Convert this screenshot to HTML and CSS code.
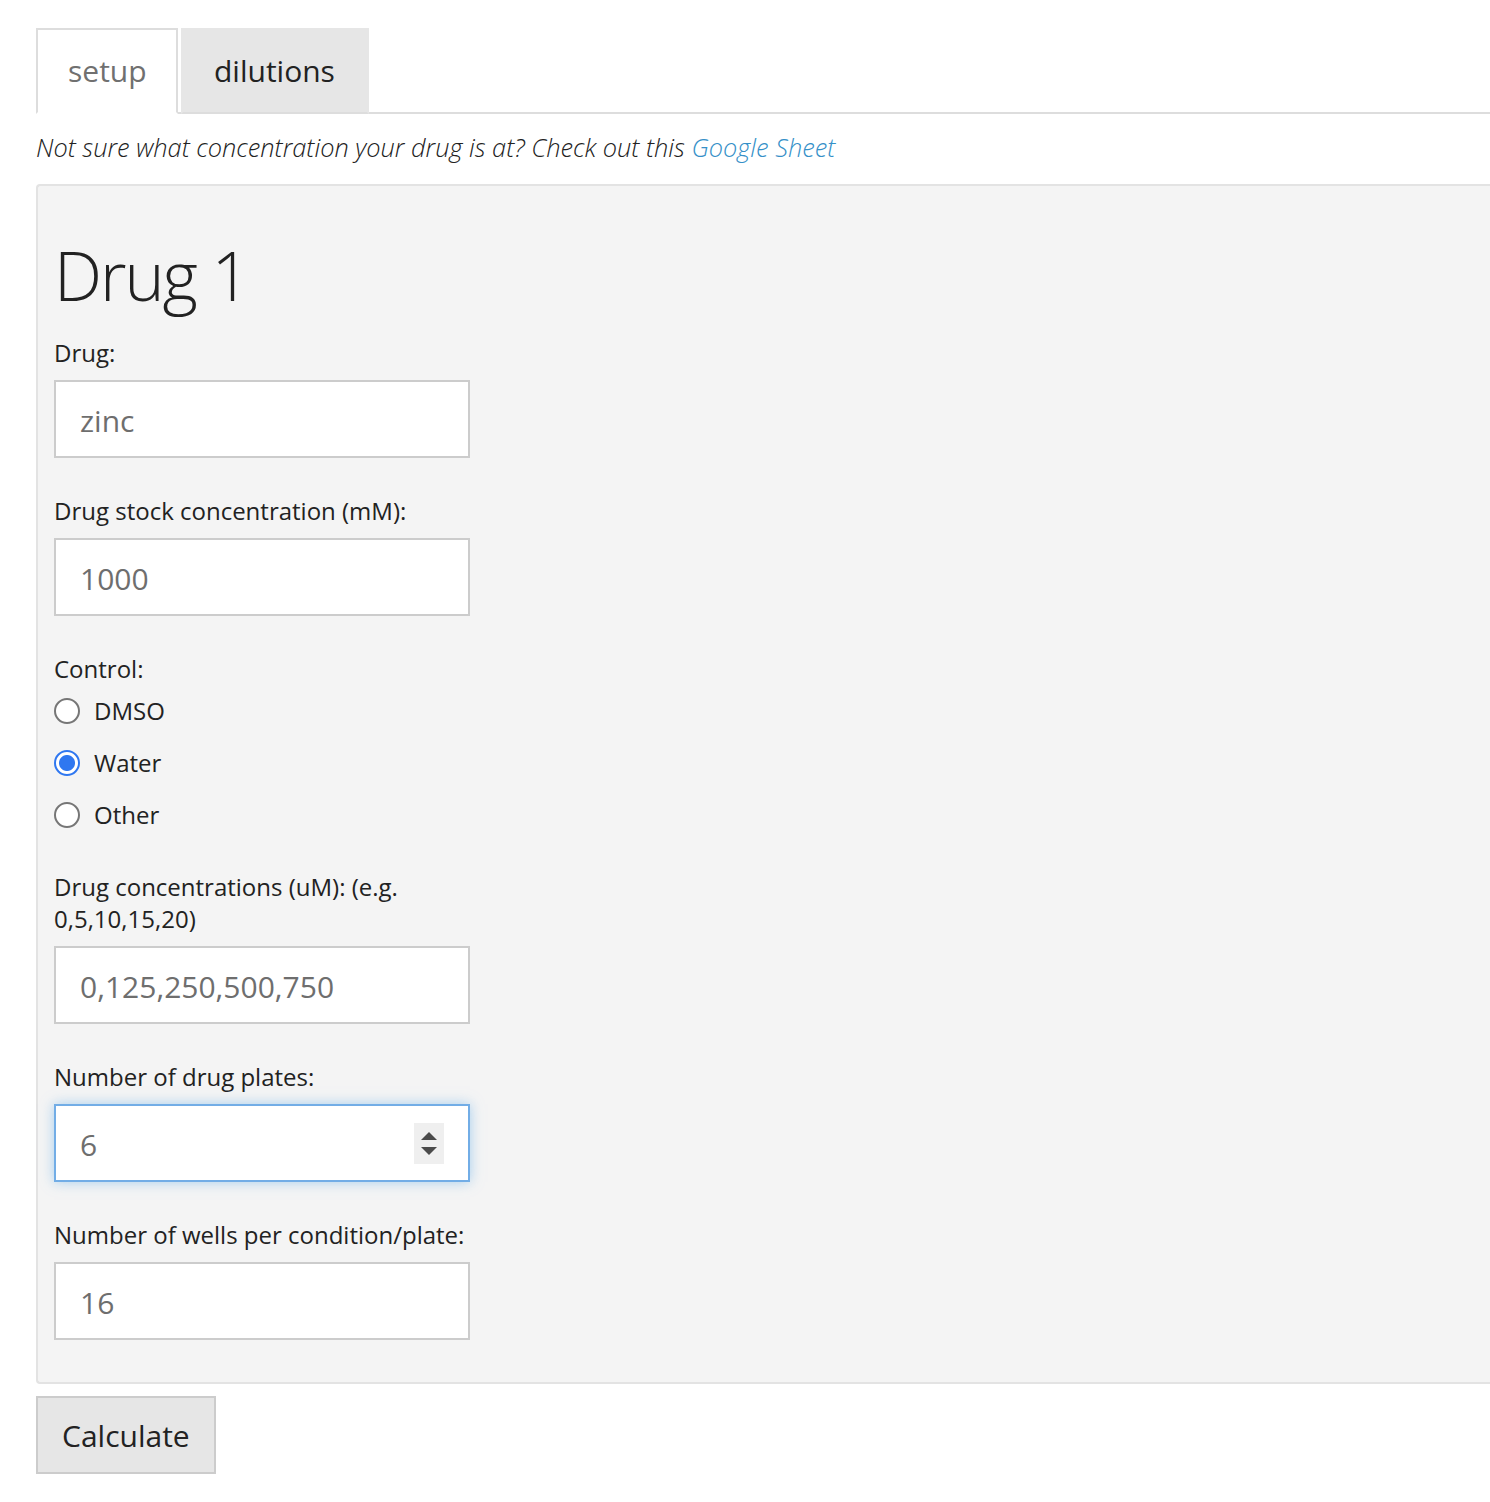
FILE: index.html
```html
<!DOCTYPE html>
<html>
<head>
<meta charset="utf-8">
<title>Drug setup</title>
<link rel="stylesheet" href="styles.css">
</head>
<body>
<div class="page">
  <ul class="tabs">
    <li class="tab active">setup</li>
    <li class="tab">dilutions</li>
  </ul>
  <p class="note">Not sure what concentration your drug is at? Check out this <a class="link" href="#">Google Sheet</a></p>
  <div class="well">
    <h1 class="title">Drug 1</h1>
    <div class="group">
      <label class="lbl">Drug:</label>
      <input class="field" type="text" value="zinc">
    </div>
    <div class="group">
      <label class="lbl">Drug stock concentration (mM):</label>
      <input class="field" type="text" value="1000">
    </div>
    <div class="group radios">
      <label class="lbl">Control:</label>
      <label class="radio"><span class="dot"></span><span>DMSO</span></label>
      <label class="radio"><span class="dot checked"></span><span>Water</span></label>
      <label class="radio"><span class="dot"></span><span>Other</span></label>
    </div>
    <div class="group">
      <label class="lbl">Drug concentrations (uM): (e.g. 0,5,10,15,20)</label>
      <input class="field" type="text" value="0,125,250,500,750">
    </div>
    <div class="group">
      <label class="lbl">Number of drug plates:</label>
      <div class="numwrap">
        <input class="field focus" type="text" value="6">
        <span class="spin"><span class="up"></span><span class="down"></span></span>
      </div>
    </div>
    <div class="group last">
      <label class="lbl">Number of wells per condition/plate:</label>
      <input class="field" type="text" value="16">
    </div>
  </div>
  <button class="btn">Calculate</button>
</div>
</body>
</html>
```
FILE: styles.css
```css
* { box-sizing: border-box; }
html, body { margin: 0; padding: 0; background: #fff; }
body {
  font-family: "Open Sans", "DejaVu Sans", sans-serif;
  color: #222;
  font-size: 24px;
  line-height: 32px;
}
.page { padding: 28px 0 0 36px; overflow: hidden; }

.tabs {
  list-style: none;
  margin: 0;
  padding: 0;
  display: flex;
  border-bottom: 2px solid #ddd;
}
.tab {
  font-size: 30px;
  line-height: 43px;
  padding: 19px 30px 20px;
  margin-right: 3px;
  margin-bottom: -2px;
  border: 2px solid transparent;
  border-bottom-color: #ddd;
  background: #e6e6e6;
  color: #222;
}
.tab.active {
  width: 142px;
  background: #fff;
  border-color: #ddd;
  border-bottom-color: #fff;
  color: #707070;
}
.tab + .tab { padding-left: 31px; padding-right: 32px; }

.note {
  margin: 17px 0 20px;
  font-size: 25.35px;
  line-height: 33px;
  font-style: italic;
  font-weight: 300;
  color: #222;
}
.link { color: #3590c8; text-decoration: none; }

.well {
  background: #f4f4f4;
  border: 2px solid #e3e3e3;
  border-right: 0;
  border-radius: 4px 0 0 4px;
  padding: 16px 0 5px 16px;
}
.title {
  margin: 35px 0 25px;
  font-size: 68px;
  line-height: 75px;
  font-weight: 300;
  letter-spacing: -2px;
  color: #222;
}
.group { width: 416px; margin-bottom: 37px; }
.group.radios { margin-bottom: 30px; }
.lbl { display: block; margin-bottom: 11px; }
.radios .lbl { margin-bottom: 0; }

.field {
  display: block;
  width: 416px;
  height: 78px;
  border: 2px solid #ccc;
  background: #fff;
  padding: 2px 24px 0;
  font-family: "Open Sans", "DejaVu Sans", sans-serif;
  font-size: 30px;
  color: #6e6e6e;
  outline: none;
  border-radius: 0;
}
.field.focus {
  border-color: #72ade6;
  box-shadow: 0 0 12px rgba(102, 175, 233, 0.55);
}
.numwrap { position: relative; width: 416px; }
.spin {
  position: absolute;
  left: 360px;
  top: 19px;
  width: 30px;
  height: 41px;
  background: #efefef;
  display: flex;
  flex-direction: column;
  align-items: center;
  justify-content: center;
  gap: 7px;
}
.up, .down { width: 0; height: 0; border-left: 8px solid transparent; border-right: 8px solid transparent; }
.up { border-bottom: 8px solid #4a4a4a; }
.down { border-top: 8px solid #4a4a4a; }

.radio {
  display: flex;
  align-items: center;
  height: 52px;
  gap: 14px;
}
.dot {
  width: 26px;
  height: 26px;
  border-radius: 50%;
  border: 2px solid #767676;
  background: #fff;
  flex: none;
}
.dot.checked {
  border: 2.5px solid #2f77f0;
  background: radial-gradient(circle, #2f77f0 0 7.5px, #fff 8.5px);
}

.btn {
  display: block;
  margin-top: 12px;
  width: 180px;
  height: 78px;
  padding: 0 24px;
  background: #e6e6e6;
  border: 2px solid #ccc;
  border-radius: 0;
  font-family: "Open Sans", "DejaVu Sans", sans-serif;
  font-size: 30px;
  color: #222;
  text-align: left;
}
```
